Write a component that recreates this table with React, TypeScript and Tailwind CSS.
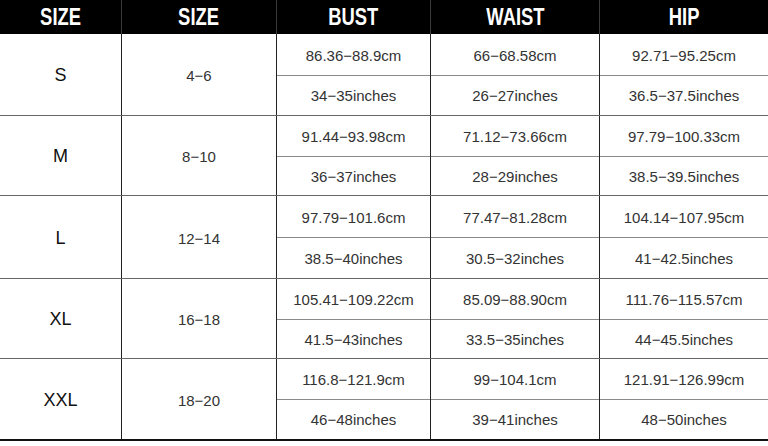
const cols = 'grid grid-cols-[122px_155px_154px_169px_168px]';

const headers = ['SIZE', 'SIZE', 'BUST', 'WAIST', 'HIP'];

type Row = {
  size: string;
  us: string;
  h: string;
  bust: [string, string];
  waist: [string, string];
  hip: [string, string];
};

const rows: Row[] = [
  { size: 'S', us: '4−6', h: 'h-[82px]', bust: ['86.36−88.9cm', '34−35inches'], waist: ['66−68.58cm', '26−27inches'], hip: ['92.71−95.25cm', '36.5−37.5inches'] },
  { size: 'M', us: '8−10', h: 'h-[80px]', bust: ['91.44−93.98cm', '36−37inches'], waist: ['71.12−73.66cm', '28−29inches'], hip: ['97.79−100.33cm', '38.5−39.5inches'] },
  { size: 'L', us: '12−14', h: 'h-[83px]', bust: ['97.79−101.6cm', '38.5−40inches'], waist: ['77.47−81.28cm', '30.5−32inches'], hip: ['104.14−107.95cm', '41−42.5inches'] },
  { size: 'XL', us: '16−18', h: 'h-[80px]', bust: ['105.41−109.22cm', '41.5−43inches'], waist: ['85.09−88.90cm', '33.5−35inches'], hip: ['111.76−115.57cm', '44−45.5inches'] },
  { size: 'XXL', us: '18−20', h: 'h-[80px]', bust: ['116.8−121.9cm', '46−48inches'], waist: ['99−104.1cm', '39−41inches'], hip: ['121.91−126.99cm', '48−50inches'] },
];

function Split({ pair, last }: { pair: [string, string]; last?: boolean }) {
  return (
    <div className={`flex flex-col ${last ? '' : 'border-r border-[#222]'}`}>
      <div className="flex-1 flex items-center justify-center pt-[3px] border-b border-[#8a8a8a]">{pair[0]}</div>
      <div className="flex-1 flex items-center justify-center pt-[2px]">{pair[1]}</div>
    </div>
  );
}

export default function App() {
  return (
    <div className="w-[768px] h-[446px] bg-white font-['Liberation_Sans',Arial,sans-serif]">
      {/* head */}
      <div className={`${cols} h-[34px] bg-black text-white`}>
        {headers.map((t, i) => (
          <div
            key={i}
            className={`flex items-center justify-center ${i < 4 ? 'border-r border-[#3a3a3a]' : ''}`}
          >
            <span className="inline-block font-bold text-[23px] leading-none scale-x-[0.8]">{t}</span>
          </div>
        ))}
      </div>

      {/* body */}
      <div className="border-b-2 border-[#111]">
        {rows.map((r, i) => (
          <div
            key={r.size}
            className={`${cols} ${r.h} text-[15px] text-[#333] ${i < rows.length - 1 ? 'border-b border-[#666]' : ''}`}
          >
            <div className="flex items-center justify-center border-r border-[#222] text-[18px] text-[#111] pt-[2px]">{r.size}</div>
            <div className="flex items-center justify-center border-r border-[#222] pt-1">{r.us}</div>
            <Split pair={r.bust} />
            <Split pair={r.waist} />
            <Split pair={r.hip} last />
          </div>
        ))}
      </div>
    </div>
  );
}
